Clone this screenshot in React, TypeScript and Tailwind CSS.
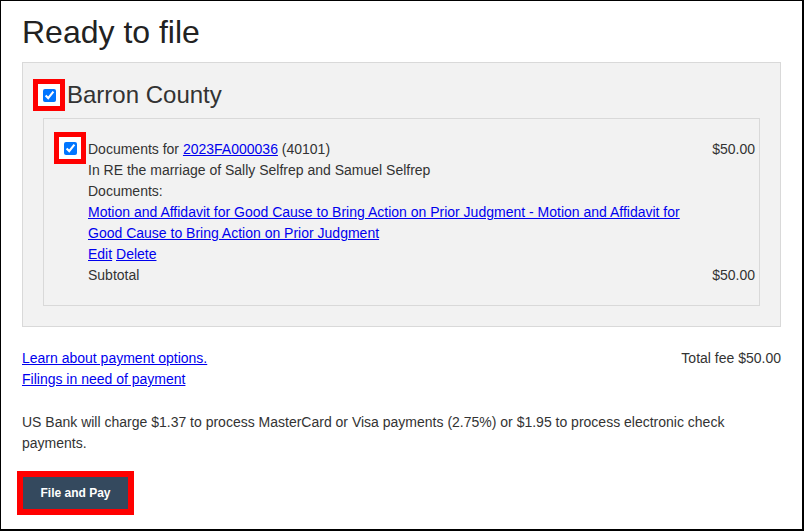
import React from 'react';

const RedFrameCheckbox: React.FC = () => (
  <span className="flex h-[32px] w-[32px] shrink-0 items-center justify-center border-[5px] border-[#ff0000] bg-white">
    <input type="checkbox" defaultChecked className="m-0 h-[13px] w-[13px]" />
  </span>
);

const Link: React.FC<{ children: React.ReactNode }> = ({ children }) => (
  <a href="#" className="text-[#0000ee] underline">
    {children}
  </a>
);

const App: React.FC = () => {
  return (
    <div
      className="box-border h-[531px] w-[804px] border-t border-l border-r-2 border-b-2 border-black bg-white px-[21px] pt-[13px] text-[14px] leading-[21px] text-[#333]"
      style={{ fontFamily: '"Liberation Sans", Arial, sans-serif' }}
    >
      <h1 className="text-[32px] leading-[36px] font-normal text-[#222]">Ready to file</h1>

      <div className="mt-[12px] border border-[#d9d9d9] bg-[#f2f2f2] px-5 pt-4 pb-5">
        <div className="-ml-[10px] flex items-center">
          <RedFrameCheckbox />
          <span className="ml-[2px] text-[24px] leading-[28px]">Barron County</span>
        </div>

        <div className="mt-[7px] border border-[#d9d9d9] pt-[13px] pr-[4px] pb-[19px] pl-[10px]">
          <div className="flex items-start gap-[2px]">
            <RedFrameCheckbox />
            <div className="mt-[7px] flex-1">
              <div className="flex justify-between">
                <span>
                  Documents for <Link>2023FA000036</Link> (40101)
                </span>
                <span>$50.00</span>
              </div>
              <div>In RE the marriage of Sally Selfrep and Samuel Selfrep</div>
              <div>Documents:</div>
              <div className="w-[610px]">
                <Link>
                  Motion and Affidavit for Good Cause to Bring Action on Prior Judgment - Motion and Affidavit for Good
                  Cause to Bring Action on Prior Judgment
                </Link>
              </div>
              <div>
                <Link>Edit</Link> <Link>Delete</Link>
              </div>
              <div className="flex justify-between">
                <span>Subtotal</span>
                <span>$50.00</span>
              </div>
            </div>
          </div>
        </div>
      </div>

      <div className="mt-[21px] flex justify-between">
        <div className="flex flex-col items-start">
          <Link>Learn about payment options.</Link>
          <Link>Filings in need of payment</Link>
        </div>
        <span>Total fee $50.00</span>
      </div>

      <p className="mt-[22px]">
        US Bank will charge $1.37 to process MasterCard or Visa payments (2.75%) or $1.95 to process electronic check
        payments.
      </p>

      <div className="-ml-[5px] mt-[17px] inline-block border-[6px] border-[#ff0000]">
        <button className="block h-[32px] w-[105px] bg-[#34495e] text-[12px] font-bold text-white">
          File and Pay
        </button>
      </div>
    </div>
  );
};

export default App;
